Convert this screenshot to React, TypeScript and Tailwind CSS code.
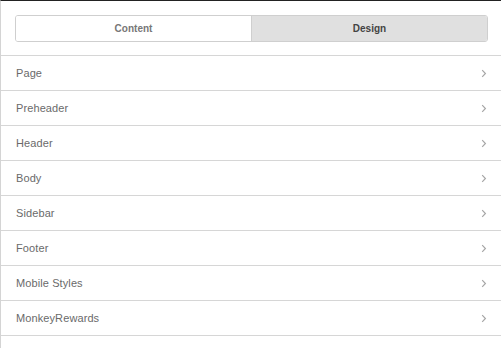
import { useState } from "react"

const sections = ["Page", "Preheader", "Header", "Body", "Sidebar", "Footer", "Mobile Styles", "MonkeyRewards"]

function Chevron() {
  return (
    <svg width="6" height="9" viewBox="0 0 6 9" fill="none" className="shrink-0">
      <path d="M1.2 1.2 L4.4 4.5 L1.2 7.8" stroke="#a6a6a6" strokeWidth="1.2" />
    </svg>
  )
}

export default function App() {
  const [tab, setTab] = useState("design")

  return (
    <div
      className="min-h-[348px] w-[501px] bg-white border-t border-[#222] border-l border-l-[#d4d4d4]"
      style={{ fontFamily: '"Liberation Sans", Arial, sans-serif' }}
    >
      {/* tabs */}
      <div className="pt-[14px] pb-[13px] pl-[14px] pr-[13px] border-b border-[#d6d6d6]">
        <div className="flex h-[27px] rounded-[3px] border border-[#cfcfcf] overflow-hidden">
          <button
            className={`flex-1 text-[10px] font-bold text-[#777] border-r border-[#cfcfcf] ${
              tab === "content" ? "bg-[#e0e0e0]" : "bg-white"
            }`}
            onClick={() => setTab("content")}
          >
            Content
          </button>
          <button
            className={`flex-1 text-[10px] font-bold text-[#444] ${tab === "design" ? "bg-[#e0e0e0]" : "bg-white"}`}
            onClick={() => setTab("design")}
          >
            Design
          </button>
        </div>
      </div>

      {/* section list */}
      <ul>
        {sections.map((s) => (
          <li
            key={s}
            className="flex items-center justify-between h-[35px] pl-[15px] pr-[14px] border-b border-[#d6d6d6] cursor-pointer"
          >
            <span className="text-[11px] text-[#6a6a6a] tracking-[0.1px]">{s}</span>
            <Chevron />
          </li>
        ))}
      </ul>
    </div>
  )
}
